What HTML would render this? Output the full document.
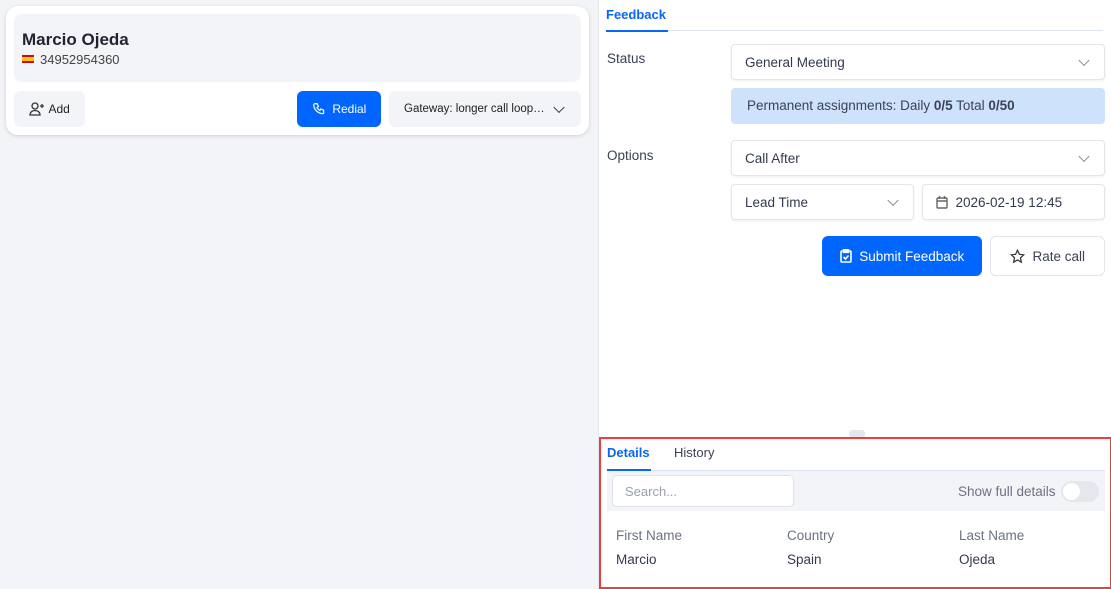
<!DOCTYPE html>
<html><head><style>
*{box-sizing:border-box;margin:0;padding:0}
body{width:1111px;height:589px;overflow:hidden;background:#f3f4f8;font-family:"Liberation Sans",sans-serif;font-size:13px;color:#374151;position:relative}
.abs{position:absolute}
.card{left:6px;top:6px;width:583px;height:129px;background:#fff;border-radius:12px;box-shadow:0 1px 4px rgba(0,0,0,.15)}
.inner{left:8px;top:8px;width:567px;height:68px;background:#f3f4f8;border-radius:8px}
.btn{display:flex;align-items:center;justify-content:center;border-radius:6px;font-size:12px;color:#222}
.right{left:598px;top:0;width:513px;height:589px;background:#fff;border-left:1px solid #e3e6ec}
.sel{background:#fff;border:1px solid #e2e5ea;border-radius:4px;box-shadow:0 1px 2px rgba(0,0,0,.06);display:flex;align-items:center;padding-left:13px;font-size:13.5px;color:#333a4e}
.chev{position:absolute;right:16px;top:50%;width:8px;height:8px;border-right:1.3px solid #888;border-bottom:1.3px solid #888;transform:translateY(-70%) rotate(45deg)}
.lbl{font-size:13.5px;color:#3b4253}
</style></head><body>
<div class="abs card">
 <div class="abs inner">
  <div class="abs" style="left:8px;top:16px;font-size:17px;font-weight:bold;color:#1f2430">Marcio Ojeda</div>
  <div class="abs" style="left:8px;top:41px;width:12px;height:8px;background:linear-gradient(#c60b1e 25%,#ffc400 25%,#ffc400 75%,#c60b1e 75%)"></div>
  <div class="abs" style="left:26px;top:38px;font-size:13px;color:#444">34952954360</div>
 </div>
 <div class="abs btn" style="left:8px;top:85px;width:71px;height:36px;background:#f3f4f8">
  <svg width="16" height="14" viewBox="0 0 16 14" fill="none" stroke="#333" stroke-width="1.3"><circle cx="6" cy="4" r="3"/><path d="M1 13c0-3 2.5-4.5 5-4.5s5 1.5 5 4.5z"/><path d="M13 2v4M11 4h4"/></svg>&nbsp;Add</div>
 <div class="abs btn" style="left:291px;top:85px;width:84px;height:36px;background:#0066ff;color:#fff">
  <svg width="14" height="14" viewBox="0 0 24 24" fill="none" stroke="#fff" stroke-width="2"><path d="M5 3h4l2 5-2.5 1.5a11 11 0 005 5L15 12l5 2v4a2 2 0 01-2 2A16 16 0 013 5a2 2 0 012-2"/></svg>&nbsp;&nbsp;Redial</div>
 <div class="abs btn" style="left:383px;top:85px;width:192px;height:36px;background:#f3f4f8;justify-content:flex-start;padding-left:15px;font-size:11.5px">Gateway: longer call loop…<span class="chev" style="right:18px;border-color:#333"></span></div>
</div>

<div class="abs right">
 <div class="abs" style="left:7px;top:7px;font-weight:bold;color:#0a66f5;font-size:13px">Feedback</div>
 <div class="abs" style="left:7px;top:30px;width:497px;height:1px;background:#dde3ee"></div>
 <div class="abs" style="left:7px;top:30px;width:62px;height:2px;background:#0a66f5"></div>
 <div class="abs lbl" style="left:8px;top:51px">Status</div>
 <div class="abs sel" style="left:132px;top:44px;width:374px;height:36px">General Meeting<span class="chev"></span></div>
 <div class="abs" style="left:132px;top:88px;width:374px;height:36px;background:#cfe2fc;border-radius:4px;padding:10px 16px;font-size:13.5px;color:#3b4253">Permanent assignments: Daily <b>0/5</b> Total <b>0/50</b></div>
 <div class="abs lbl" style="left:8px;top:148px">Options</div>
 <div class="abs sel" style="left:132px;top:140px;width:374px;height:36px">Call After<span class="chev"></span></div>
 <div class="abs sel" style="left:132px;top:184px;width:183px;height:36px">Lead Time<span class="chev"></span></div>
 <div class="abs sel" style="left:323px;top:184px;width:183px;height:36px">
  <svg width="12" height="13" viewBox="0 0 12 13" fill="none" stroke="#666" stroke-width="1.4"><rect x="1" y="2" width="10" height="10" rx="1"/><path d="M1 5h10M3.5 0v3M8.5 0v3"/></svg>&nbsp;&nbsp;2026-02-19 12:45</div>
 <div class="abs btn" style="left:223px;top:236px;width:160px;height:40px;background:#0066ff;color:#fff;font-size:13.5px">
  <svg width="12" height="14" viewBox="0 0 12 14" fill="none" stroke="#fff" stroke-width="1.6"><rect x="1" y="2" width="10" height="11" rx="1"/><rect x="3.5" y="0.8" width="5" height="2.5"/><path d="M3.5 8l2 2 3-3.5"/></svg>&nbsp;&nbsp;Submit Feedback</div>
 <div class="abs btn" style="left:391px;top:236px;width:115px;height:40px;background:#fff;border:1px solid #e2e5ea;font-size:13.5px;color:#3b4253">
  <svg width="15" height="15" viewBox="0 0 24 24" fill="none" stroke="#333" stroke-width="2"><path d="M12 2l3 6.5 7 .8-5.2 4.8 1.4 7L12 17.6 5.8 21l1.4-7L2 9.3l7-.8z"/></svg>&nbsp;&nbsp;Rate call</div>

 <div class="abs" style="left:250px;top:430px;width:16px;height:8px;background:#e5e7ee;border-radius:3px"></div>
 <div class="abs" style="left:0;top:437px;width:513px;height:152px;border:2px solid #ee3c42"></div>
 <div class="abs" style="left:8px;top:445px;font-weight:bold;color:#0a66f5">Details</div>
 <div class="abs" style="left:75px;top:445px;color:#3b4253">History</div>
 <div class="abs" style="left:8px;top:470px;width:498px;height:41px;background:#f3f4f8;border-top:1px solid #dde3ee"></div>
 <div class="abs" style="left:8px;top:469px;width:44px;height:2px;background:#0a66f5"></div>
 <div class="abs" style="left:13px;top:475px;width:182px;height:32px;background:#fff;border:1px solid #e0e3e8;border-radius:5px;padding:8px 12px;color:#9aa1ac;font-size:13px">Search...</div>
 <div class="abs" style="left:359px;top:484px;color:#6b7280;font-size:13.5px">Show full details</div>
 <div class="abs" style="left:462px;top:481px;width:38px;height:21px;border-radius:11px;background:#e5e7eb"><div class="abs" style="left:2px;top:2px;width:17px;height:17px;border-radius:50%;background:#fff"></div></div>
 <div class="abs" style="left:17px;top:528px;color:#6b7280;font-size:13.5px">First Name</div>
 <div class="abs" style="left:188px;top:528px;color:#6b7280;font-size:13.5px">Country</div>
 <div class="abs" style="left:360px;top:528px;color:#6b7280;font-size:13.5px">Last Name</div>
 <div class="abs" style="left:17px;top:552px;color:#333a4e;font-size:13.5px">Marcio</div>
 <div class="abs" style="left:188px;top:552px;color:#333a4e;font-size:13.5px">Spain</div>
 <div class="abs" style="left:360px;top:552px;color:#333a4e;font-size:13.5px">Ojeda</div>
</div>
</body></html>
